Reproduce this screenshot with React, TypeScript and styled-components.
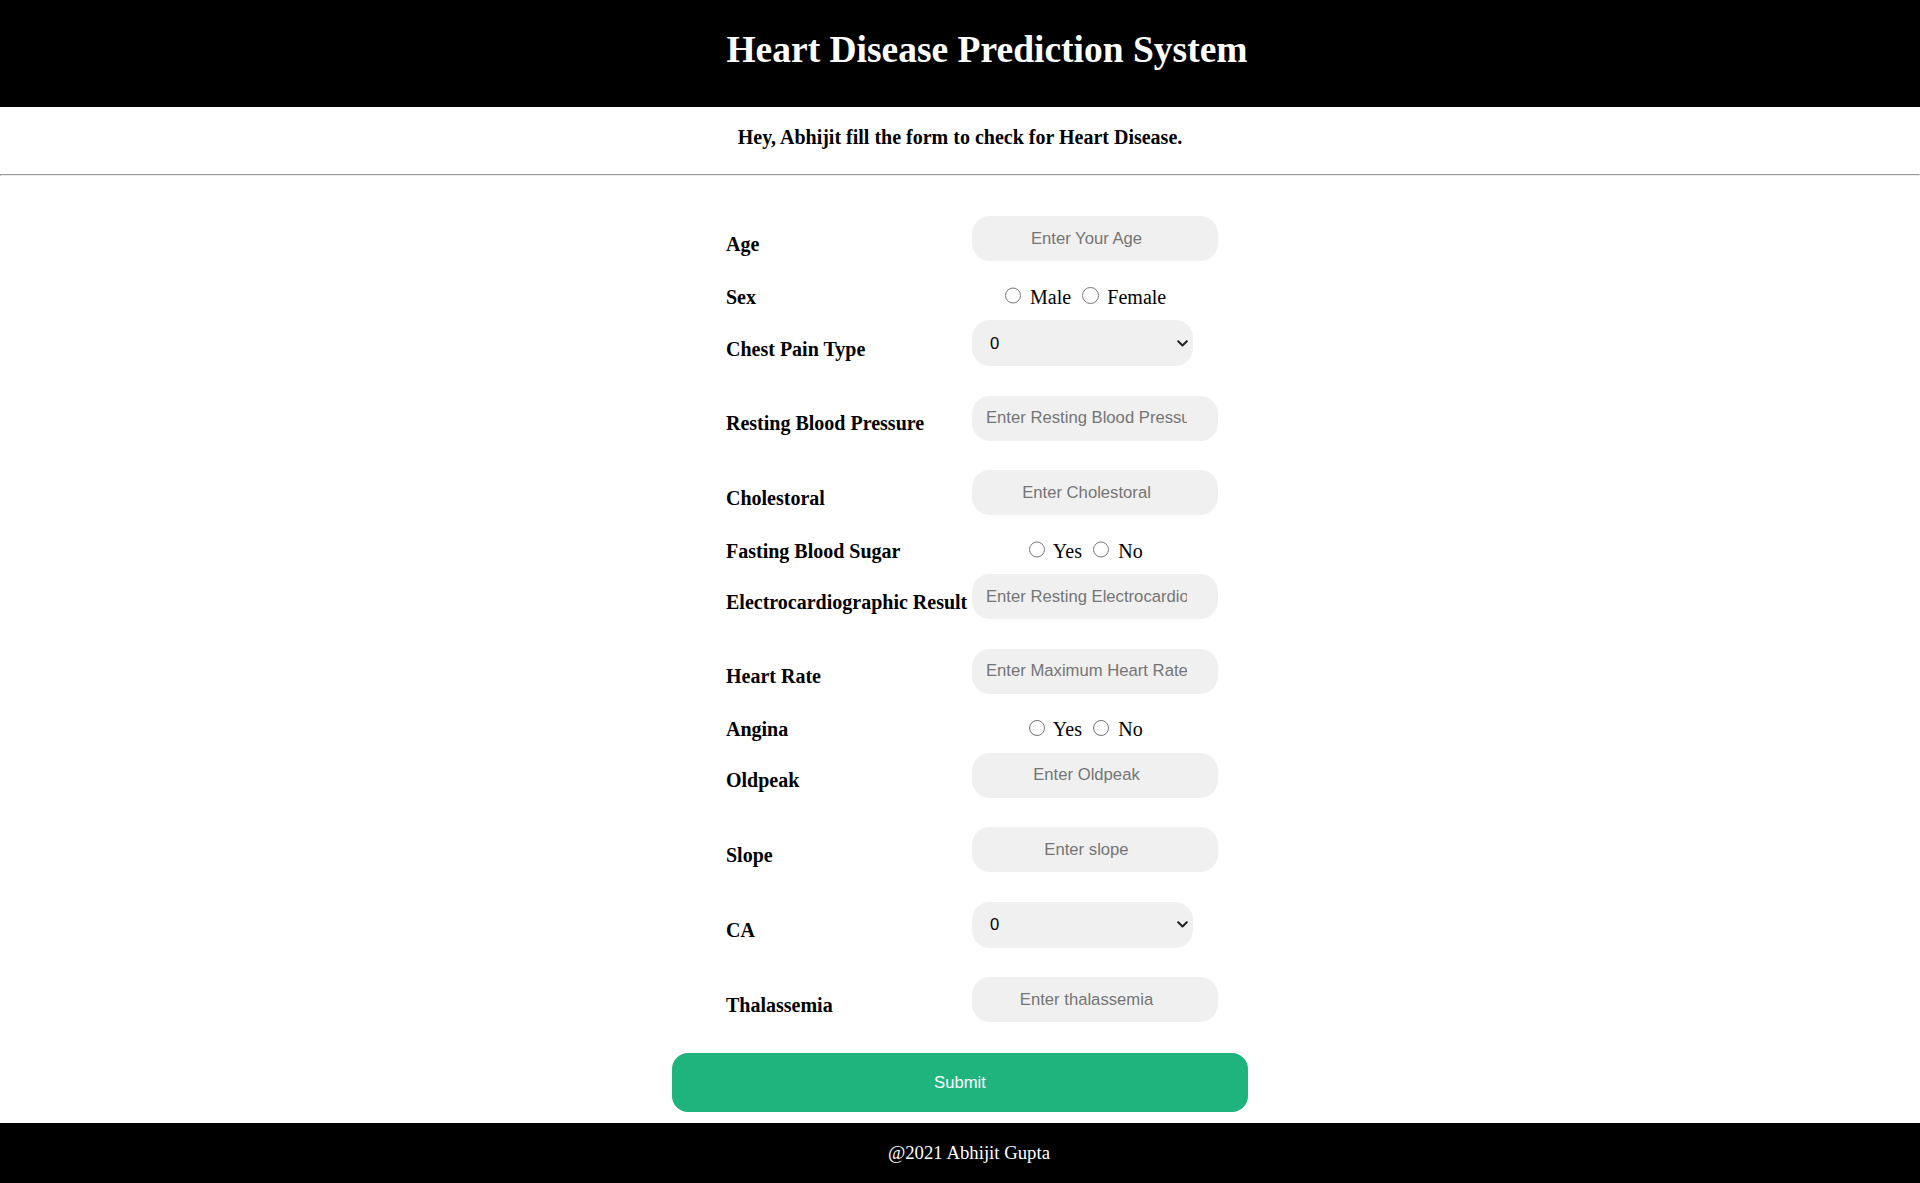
import React from "react";
import styled, { createGlobalStyle } from "styled-components";

const GlobalStyle = createGlobalStyle`
  html, body {
    margin: 0;
    padding: 0;
    background: #ffffff;
    font-family: "Liberation Serif", "Times New Roman", serif;
    color: #000000;
  }
`;

const Page = styled.div`
  display: flex;
  flex-direction: column;
  min-height: 1183px;
`;

const Header = styled.header`
  background: #000000;
  height: 107px;
  box-sizing: border-box;
  padding: 28px 0 0 54px;
  text-align: center;
`;

const Title = styled.h1`
  margin: 0;
  color: #ffffff;
  font-family: "Liberation Serif", "Times New Roman", serif;
  font-weight: 700;
  font-size: 37.5px;
  line-height: 43px;
`;

const Greeting = styled.p`
  margin: 0;
  padding: 18.5px 0 26.5px;
  text-align: center;
  font-weight: 700;
  font-size: 20px;
  line-height: 22px;
`;

const Rule = styled.hr`
  margin: 0;
  border-width: 1px;
  border-style: inset;
  color: gray;
  height: 0;
`;

const Form = styled.form`
  width: 576px;
  margin: 25.25px auto 0;
  display: flex;
  flex-direction: column;
`;

const Grid = styled.div`
  display: grid;
  grid-template-columns: 246px 246px;
  padding-left: 54px;
`;

const Row = styled.div<{ $kind: "field" | "choice" }>`
  display: grid;
  grid-template-columns: subgrid;
  grid-column: 1 / -1;
  align-items: ${(p) => (p.$kind === "choice" ? "baseline" : "center")};
  height: ${(p) => (p.$kind === "choice" ? "29.5px" : "auto")};
  padding: ${(p) => (p.$kind === "choice" ? "0" : "14.75px 0")};
`;

const Label = styled.label<{ $kind: "field" | "choice" }>`
  font-weight: 700;
  font-size: 20px;
  line-height: 23px;
  white-space: nowrap;
  align-self: ${(p) => (p.$kind === "choice" ? "baseline" : "end")};
  margin-bottom: ${(p) => (p.$kind === "choice" ? "0" : "5.25px")};
  padding-top: ${(p) => (p.$kind === "choice" ? "9.5px" : "0")};
`;

const TextInput = styled.input`
  width: 246px;
  height: 45px;
  box-sizing: border-box;
  border: none;
  outline: none;
  border-radius: 18px;
  background: #f0f0f0;
  padding: 0 31px 0 14px;
  text-align: center;
  font-family: "Liberation Sans", Arial, sans-serif;
  font-size: 16.67px;
  color: #000000;
  &::placeholder {
    color: #757575;
  }
`;

const SelectWrap = styled.div`
  position: relative;
  width: 221px;
  height: 46px;
`;

const Select = styled.select`
  appearance: none;
  width: 221px;
  height: 46px;
  box-sizing: border-box;
  border: none;
  outline: none;
  border-radius: 18px;
  background: #f0f0f0;
  padding: 0 30px 0 18px;
  font-family: "Liberation Sans", Arial, sans-serif;
  font-size: 16.67px;
  color: #000000;
`;

const Chevron = styled.svg`
  position: absolute;
  right: 5px;
  top: 19.5px;
  width: 11px;
  height: 7px;
  pointer-events: none;
`;

const Choices = styled.div`
  width: 221px;
  text-align: center;
  font-size: 20px;
  line-height: 23px;
  padding-top: 7.75px;
  white-space: nowrap;
`;

const Radio = styled.input`
  width: 16.25px;
  height: 16.25px;
  margin: 3.75px 3.75px 0 6.25px;
  vertical-align: baseline;
`;

const SubmitButton = styled.button`
  margin-top: 16.25px;
  width: 576px;
  height: 59px;
  border: none;
  border-radius: 16px;
  background: #1fb37e;
  color: #ffffff;
  font-family: "Liberation Sans", Arial, sans-serif;
  font-size: 16.67px;
  cursor: pointer;
`;

const Footer = styled.footer`
  margin-top: 11px;
  background: #000000;
  height: 60px;
  display: flex;
  align-items: center;
  justify-content: center;
  padding-left: 18px;
  color: #ffffff;
  font-size: 18.75px;
`;

type Field =
  | { kind: "input"; label: string; name: string; placeholder: string }
  | { kind: "select"; label: string; name: string; options: string[] }
  | { kind: "radio"; label: string; name: string; options: string[] };

const fields: Field[] = [
  { kind: "input", label: "Age", name: "age", placeholder: "Enter Your Age" },
  { kind: "radio", label: "Sex", name: "sex", options: ["Male", "Female"] },
  { kind: "select", label: "Chest Pain Type", name: "cp", options: ["0", "1", "2", "3"] },
  { kind: "input", label: "Resting Blood Pressure", name: "trestbps", placeholder: "Enter Resting Blood Pressure" },
  { kind: "input", label: "Cholestoral", name: "chol", placeholder: "Enter Cholestoral" },
  { kind: "radio", label: "Fasting Blood Sugar", name: "fbs", options: ["Yes", "No"] },
  { kind: "input", label: "Electrocardiographic Result", name: "restecg", placeholder: "Enter Resting Electrocardiographic Result" },
  { kind: "input", label: "Heart Rate", name: "thalach", placeholder: "Enter Maximum Heart Rate" },
  { kind: "radio", label: "Angina", name: "exang", options: ["Yes", "No"] },
  { kind: "input", label: "Oldpeak", name: "oldpeak", placeholder: "Enter Oldpeak" },
  { kind: "input", label: "Slope", name: "slope", placeholder: "Enter slope" },
  { kind: "select", label: "CA", name: "ca", options: ["0", "1", "2", "3", "4"] },
  { kind: "input", label: "Thalassemia", name: "thal", placeholder: "Enter thalassemia" },
];

function FieldRow({ field }: { field: Field }) {
  if (field.kind === "radio") {
    return (
      <Row $kind="choice">
        <Label $kind="choice">{field.label}</Label>
        <Choices>
          {field.options.map((opt) => (
            <React.Fragment key={opt}>
              <Radio type="radio" name={field.name} value={opt} /> {opt}{" "}
            </React.Fragment>
          ))}
        </Choices>
      </Row>
    );
  }
  if (field.kind === "select") {
    return (
      <Row $kind="field">
        <Label $kind="field">{field.label}</Label>
        <SelectWrap>
          <Select name={field.name} defaultValue={field.options[0]}>
            {field.options.map((o) => (
              <option key={o} value={o}>
                {o}
              </option>
            ))}
          </Select>
          <Chevron viewBox="0 0 11 7" aria-hidden="true">
            <path d="M1.2 1.2 L5.5 5.5 L9.8 1.2" fill="none" stroke="#222" strokeWidth="2" strokeLinecap="round" strokeLinejoin="round" />
          </Chevron>
        </SelectWrap>
      </Row>
    );
  }
  return (
    <Row $kind="field">
      <Label $kind="field">{field.label}</Label>
      <TextInput type="text" name={field.name} placeholder={field.placeholder} />
    </Row>
  );
}

export default function App() {
  return (
    <>
      <GlobalStyle />
      <Page>
        <Header>
          <Title>Heart Disease Prediction System</Title>
        </Header>
        <Greeting>Hey, Abhijit fill the form to check for Heart Disease.</Greeting>
        <Rule />
        <Form onSubmit={(e) => e.preventDefault()}>
          <Grid>
            {fields.map((f) => (
              <FieldRow key={f.name} field={f} />
            ))}
          </Grid>
          <SubmitButton type="submit">Submit</SubmitButton>
        </Form>
        <Footer>@2021 Abhijit Gupta</Footer>
      </Page>
    </>
  );
}
